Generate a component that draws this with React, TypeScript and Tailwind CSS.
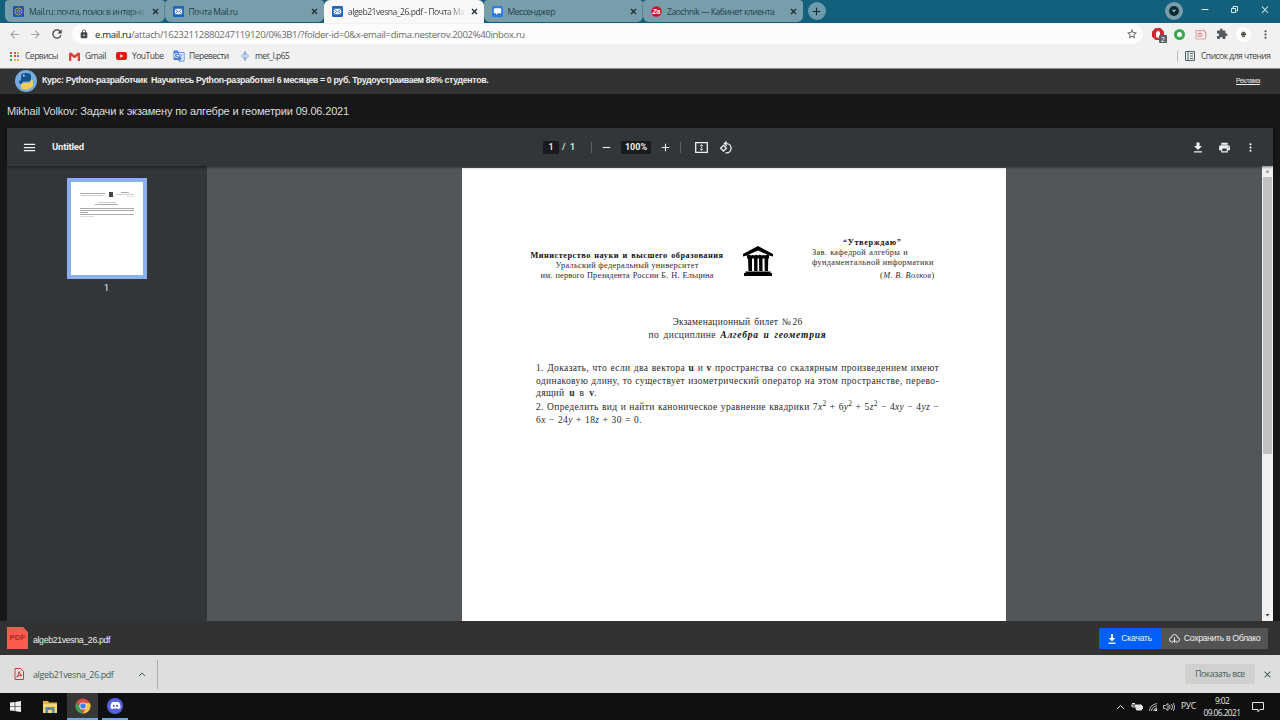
import React from "react";
import {
  MdLock, MdStarBorder, MdExtension, MdMoreVert, MdMenu, MdAdd, MdRemove, MdPrint, MdArrowBack,
  MdArrowForward, MdRefresh, MdClose, MdGTranslate,
} from "react-icons/md";
import { FaDiscord } from "react-icons/fa";

const ui = "font-['Open_Sans','Noto_Sans',sans-serif]";
const arial = "font-['Liberation_Sans',Arial,sans-serif]";
const line = "whitespace-nowrap [text-align-last:justify]";

function EnvelopeIcon() {
  return (
    <svg viewBox="0 0 12 12" className="size-[11px] shrink-0">
      <rect width="12" height="12" rx="1.5" fill="#1f63c0" />
      <rect x="2" y="3" width="8" height="6" fill="#fff" />
      <path d="M2.3 3.5 6 6.5l3.700-3M2.500 8.700 4.700 6M9.500 8.700 7.300 6" stroke="#1f63c0" fill="none" strokeWidth=".9" />
    </svg>
  );
}

function Tab({ icon, label, width, active, divider }: {
  icon: React.ReactNode; label: string; width: string; active?: boolean; divider?: boolean;
}) {
  const look = active ? "h-[23px] rounded-t-md bg-[#f8f8f8] text-[#444]" : "h-[22px] rounded-b-md rounded-t bg-[#789eab] text-[#1f434f]";
  return (
    <div className={`flex w-[159.5px] shrink-0 items-center pl-2 pr-[5px] ${look}`}>
      {icon}
      <div className={`ml-[5px] mt-px text-[8.6px] leading-[14px] tracking-[-0.5px] ${width} ${line}`}>{label}</div>
      <svg viewBox="0 0 9 9" className="ml-auto size-[9px] shrink-0 text-[#1f2f35]" fill="none" stroke="currentColor" strokeWidth="1.400"><path d="M2 2l5 5M7 2 2 7" /></svg>
      {divider && <div className="-mr-[5px] ml-[4px] h-[13px] w-px bg-[#5b808d]" />}
    </div>
  );
}

function TabStrip() {
  return (
    <div className="flex h-[23px] items-start bg-[#12607c] pl-[5px]">
      <Tab divider width="w-[115px] [mask-image:linear-gradient(to_right,#000_88%,#0003)]" label="Mail.ru: почта, поиск в интерне" icon={
        <svg viewBox="0 0 12 12" className="size-[11px] shrink-0"><rect width="12" height="12" rx="1.500" fill="#1d55b0" /><circle cx="6" cy="6" r="3.800" fill="none" stroke="#dba545" strokeWidth="1" /><circle cx="6" cy="6" r="1.500" fill="none" stroke="#dba545" /></svg>
      } />
      <Tab width="w-[49px]" label="Почта Mail.ru" icon={<EnvelopeIcon />} />
      <Tab active width="w-[116px] [mask-image:linear-gradient(to_right,#000_85%,#0002)]" label="algeb21vesna_26.pdf - Почта Ма" icon={<EnvelopeIcon />} />
      <Tab divider width="w-[47px]" label="Мессенджер" icon={
        <svg viewBox="0 0 12 12" className="size-[11px] shrink-0"><rect width="12" height="12" rx="2" fill="#2c7be0" /><path d="M2 3.500q0-1 1-1h6q1 0 1 1v3.500q0 1-1 1H6.500L4.500 9.800V8H3q-1 0-1-1z" fill="#fff" /></svg>
      } />
      <Tab width="w-[106px]" label="Zaochnik — Кабинет клиента" icon={
        <svg viewBox="0 0 12 12" className="size-[11px] shrink-0"><circle cx="6" cy="6" r="5.700" fill="#c5162e" /><text x="1.500" y="8.600" fontSize="7.500" fontWeight="bold" fontStyle="italic" fill="#fff" fontFamily="Liberation Sans">Za</text></svg>
      } />
      <div className="ml-[5px] mt-[2px] flex size-[18px] items-center justify-center rounded-full bg-[#6f9aa9]">
        <MdAdd className="size-[13px] text-[#102c36]" />
      </div>
      <div className="ml-auto mt-[2px] flex size-[18px] items-center justify-center rounded-full bg-[#789eab]">
        <svg viewBox="0 0 10 10" className="size-[10px]"><circle cx="5" cy="5" r="5" fill="#102a33" /><path d="M2.800 3.800h4.400L5 6.600z" fill="#9bb7c0" /></svg>
      </div>
      <svg viewBox="0 0 84 16" className="ml-[13px] mt-[2px] h-4 w-[84px] text-[#d5eaf1]" fill="none" stroke="currentColor">
        <path d="M5.500 7.500h7M66 4.500l6 6.500M72 4.500l-6 6.500" strokeWidth="1.100" />
        <path d="M35.500 6.500h4v4h-4zM37 6V4.500h4.500V9H40" />
      </svg>
    </div>
  );
}

function AddressBar() {
  return (
    <div className="flex h-[22px] items-center bg-[#f1f1f1] pl-[8px] text-[#55585b]">
      <MdArrowBack className="size-[13px] text-[#a6a6a6]" />
      <MdArrowForward className="ml-[8px] size-[13px] text-[#a6a6a6]" />
      <MdRefresh className="ml-[8px] size-[14px] text-[#3e4144]" />
      <div className="ml-[8px] flex h-[20px] w-[1071px] items-center rounded-full bg-[#fcfcfc] pl-[7px] pr-[5px]">
        <MdLock className="size-[10px] text-[#46494c]" />
        <div className={`ml-[6px] mt-px w-[430px] text-[9.6px] leading-4 text-[#6c6c6c] ${line} tracking-[-0.37px]`}>
          <span className="text-[#222]">e.mail.ru</span>/attach/16232112880247119120/0%3B1/?folder-id=0&amp;x-email=dima.nesterov.2002%40inbox.ru
        </div>
        <MdStarBorder className="ml-auto size-[12px]" />
      </div>
      <div className="relative ml-[9px] size-[12px]">
        <svg viewBox="0 0 12 12" className="size-3"><path d="M3.500 0h5L12 3.500v5L8.500 12h-5L0 8.500v-5z" fill="#cf2a33" /><path d="M4 9V4.500q.7-1 1.200 0V3q.8-1 1.400 0v1q.8-.8 1.400 0v4L6.500 10z" fill="#fff" /></svg>
        <div className="absolute left-[7px] top-[7px] flex h-[8px] w-[8px] items-center justify-center rounded-[1px] bg-[#596064] font-['Liberation_Sans'] text-[7px] leading-none text-white">2</div>
      </div>
      <div className="ml-[10px] size-[11px] rounded-full border-[3px] border-[#39a852] bg-white" />
      <svg viewBox="0 0 12 12" className="ml-[10px] size-[12px]" fill="none" stroke="#e09a9c"><path d="M1 2.500h7L10.500 5v6H1zM3 5.500h4v3H3zM5 3v5M8 1l3 3v5" /></svg>
      <MdExtension className="ml-[9px] size-[12px] text-[#54595c]" />
      <div className="ml-[8px] flex size-[15px] items-center justify-center rounded-full bg-white">
        <svg viewBox="0 0 8 8" className="size-[7px]"><circle cx="4" cy="3.500" r="2.800" fill="#777d73" /><path d="M1 4h6M2.500 6.500h3M4 1.500v2" stroke="#2e332d" /></svg>
      </div>
      <MdMoreVert className="ml-[8px] size-[13px]" />
    </div>
  );
}

const dots = ["#dc5144", "#dc5144", "#e9b13a", "#3a9d5c", "#dc5144", "#4a83d8", "#3a9d5c", "#e9b13a", "#e9b13a"];

function Bookmarks() {
  return (
    <div className="flex h-[24px] items-center border-b border-[#8e8e8e] bg-[#f1f1f1] pb-px pl-[10px] pr-[10px] text-[8.500px] leading-4 tracking-[-0.5px] text-[#404448]">
      <div className="grid grid-cols-3 gap-[1.500px]">
        {dots.map((c, i) => <div key={i} className="size-[2px]" style={{ background: c }} />)}
      </div>
      <div className="ml-[6px] w-[32px] whitespace-nowrap">Сервисы</div>
      <svg viewBox="0 0 11 9" className="ml-[12px] h-[9px] w-[11px]"><path d="M0 1.500V9h2.300V4l3.200 2.300L8.700 4v5H11V1.500Q10-.3 8.500.8l-3 2.400-3-2.400Q1-.3 0 1.500z" fill="#d9453a" /></svg>
      <div className="ml-[5px] w-[22px] tracking-[-0.4px]">Gmail</div>
      <svg viewBox="0 0 11 8" className="ml-[9px] h-[8px] w-[11px]"><rect width="11" height="8" rx="2" fill="#e8150d" /><path d="M4.300 2.200v3.600L7.400 4z" fill="#fff" /></svg>
      <div className="ml-[5px] w-[32px] whitespace-nowrap">YouTube</div>
      <MdGTranslate className="ml-[9px] size-[12px] text-[#4780d6]" />
      <div className="ml-[4px] w-[41px] whitespace-nowrap">Перевести</div>
      <svg viewBox="0 0 10 10" className="ml-[10px] size-[10px]" fill="none" stroke="#6d96d9"><path d="M5 0v10M5 1.500 8.500 5 5 8.500 1.500 5z" /></svg>
      <div className="ml-[5px] w-[36px] whitespace-nowrap">met_I.p65</div>
      <div className="ml-auto h-[11px] w-px bg-[#bbb]" />
      <svg viewBox="0 0 10 10" className="ml-[7px] size-[10px]" fill="none" stroke="#4d6367"><path d="M.5.5h9v9h-9zM3 .5v9M5 2.500h3M5 5h3M5 7.500h3" /></svg>
      <div className={`ml-[6px] w-[69px] ${line}`}>Список для чтения</div>
    </div>
  );
}

function PythonIcon() {
  return (
    <svg viewBox="0 0 22 22" className="size-[22px]">
      <circle cx="11" cy="11" r="11" fill="#76ade0" />
      <path d="M6 10.500V6q0-3 5-3t5 3v3q0 2.500-2.500 2.500h-4Q7 11.500 7 14H5.500Q4 14 4 10.500z" fill="#17548e" />
      <path d="M16 9.500h1q1.500 1 1 5t-3 3.500q-1 1.500-4.500 1.500-5 0-4.500-3v-1.500Q6 13 8.500 13h4Q16 13 16 9.500z" fill="#f4cc55" />
      <circle cx="8.800" cy="5.700" r=".9" fill="#d8ebfa" />
    </svg>
  );
}

function Ad() {
  return (
    <div className={`flex h-[25px] items-center bg-[#323232] pb-px pl-[15px] pr-[20px] text-[#eee] ${arial}`}>
      <PythonIcon />
      <div className={`ml-[5px] w-[103px] text-[8.800px] font-bold ${line} tracking-[-0.35px]`}>Курс: Python-разработчик</div>
      <div className={`ml-[6px] w-[337px] text-[8.800px] font-bold ${line} tracking-[-0.35px]`}>Научитесь Python-разработке! 6 месяцев = 0 руб. Трудоустраиваем 88% студентов.</div>
      <div className="mb-px ml-auto w-[24px] whitespace-nowrap text-[6.500px] tracking-[-0.3px] underline">Реклама</div>
    </div>
  );
}

function PdfToolbar() {
  return (
    <div className="relative z-10 flex h-[38px] shrink-0 items-center bg-[#323639] pl-[15px] pr-[16px] font-[Roboto,sans-serif] text-[9px] font-medium text-[#f0f0f0] shadow-[0_1px_3px_#0008]">
      <MdMenu className="size-[15px]" />
      <div className="ml-[15px] mt-px w-[34px] text-[9.500px] font-bold tracking-[-0.2px]">Untitled</div>
      <div className="ml-[457px] flex h-[13px] w-[16px] items-center justify-center bg-[#191b1c] pt-px">1</div>
      <div className="ml-[3px] mt-px w-[14px] whitespace-nowrap">/&nbsp; 1</div>
      <div className="ml-[15px] h-[11px] w-px bg-[#5c6063]" />
      <MdRemove className="ml-[8px] size-[13px]" />
      <div className="ml-[8px] flex h-[13px] w-[30px] items-center justify-center bg-[#191b1c] pt-px font-bold">100%</div>
      <MdAdd className="ml-[8px] size-[13px]" />
      <div className="ml-[8px] h-[11px] w-px bg-[#5c6063]" />
      <svg viewBox="0 0 13 11" className="ml-[14px] h-[11px] w-[13px]"><path d="M.7.700h11.600v9.600H.7z" fill="none" stroke="currentColor" strokeWidth="1.300" /><path d="M6.500 2.200 8.300 4.200H4.700zM6.500 8.800 8.300 6.800H4.700z" fill="currentColor" /><path d="M6 5h1v1H6z" fill="currentColor" /></svg>
      <svg viewBox="0 0 13 13" className="ml-[11px] size-[13px]" fill="none" stroke="currentColor" strokeWidth="1.300"><path d="M4.500 4.300 7.400 7.200 4.500 10 1.600 7.200zM6 2.600h1.500a4.600 4.600 0 0 1 0 9.200H6.500" /><path d="M7.700.500 5.500 2.600l2.200 2.100" /></svg>
      <svg viewBox="0 0 10 11" className="ml-auto h-[11px] w-[10px]" fill="currentColor"><path d="M3.500.500h3V4H9L5 8 1 4h2.500zM1 9.200h8v1.200H1z" /></svg>
      <MdPrint className="ml-[15px] size-[13px]" />
      <MdMoreVert className="ml-[13px] size-[13px]" />
    </div>
  );
}

function Thumbnail() {
  const bar = "h-px bg-[#aaa]";
  return (
    <div className="flex w-[200px] shrink-0 flex-col items-center bg-[#323639] pr-px pt-[12px] font-[Roboto,sans-serif]">
      <div className="flex h-[101px] w-[80px] flex-col border-4 border-[#8ab0ee] bg-white px-[9px] pt-[10px]">
        <div className="flex items-center justify-between">
          <div className="flex flex-col items-center gap-[1px]"><div className={`w-[25px] ${bar}`} /><div className="h-px w-[22px] bg-[#ccc]" /></div>
          <div className="h-[5px] w-[4px] bg-[#444]" />
          <div className="flex w-[17px] flex-col items-end gap-[1px]"><div className={`mr-[5px] w-[8px] ${bar}`} /><div className="h-px w-full bg-[#ccc]" /><div className="h-px w-[7px] bg-[#ddd]" /></div>
        </div>
        <div className="mt-[5px] flex flex-col items-center gap-px"><div className="h-px w-[18px] bg-[#ccc]" /><div className={`w-[23px] ${bar}`} /></div>
        <div className="mt-[3px] flex flex-col gap-px"><div className={bar} /><div className={bar} /><div className={`w-[8px] ${bar}`} /><div className={bar} /><div className="h-px w-[14px] bg-[#ddd]" /></div>
      </div>
      <div className="mt-[3px] text-[9px] leading-3 text-[#eee]">1</div>
    </div>
  );
}

function Sq() {
  return <sup className="top-[-4px] text-[7.400px] leading-none">2</sup>;
}

function Page() {
  const body = `w-[403px] ${line}`;
  return (
    <div className="mr-[2px] w-[544px] shrink-0 bg-white font-['Liberation_Serif',serif] text-[#2b2b2b]">
      <div className="mt-[68px] flex pl-[68.500px] text-[8.300px] leading-[10px]">
        <div className="mt-[15px] flex w-[194px] flex-col items-center">
          <div className={`w-[193px] font-bold text-[#111] tracking-[0.480px] ${line}`}>Министерство науки и высшего образования</div>
          <div className={`w-[143px] tracking-[0.32px] ${line}`}>Уральский федеральный университет</div>
          <div className={`w-[173px] tracking-[0.15px] ${line}`}>им. первого Президента России Б. Н. Ельцина</div>
        </div>
        <svg viewBox="0 0 30 30" className="ml-[18.500px] mt-[10px] size-[30px]" fill="#000">
          <path d="M15 0 30 8v2.500l-3-.7L15 4.500 3 9.800l-3 .7V8zM4 9.500q2-1.500 4 0 1.500-1.200 3.500 0 1.500-1.500 3.500 0 2-1.500 3.500 0 2-1.200 3.500 0 2-1.500 4 0v3H4zM5 11h4v14H5.500zM11 11h3.500v14H11.200zM16 11h3.500v14H16.200zM21.500 11h3.800l-.3 14h-3.300zM2.500 25.500h25V27H29v3H1v-3h1.500z" />
        </svg>
        <div className="ml-[39.500px] mt-[2px] w-[122px]">
          <div className={`ml-[31px] w-[58px] font-bold text-[#111] tracking-[0.6px] ${line}`}>“Утверждаю”</div>
          <div className={`w-[96px] tracking-[0.3px] ${line}`}>Зав. кафедрой алгебры и</div>
          <div className={`w-[121px] tracking-[0.32px] ${line}`}>фундаментальной информатики</div>
          <div className={`ml-auto mt-[3px] w-[54px] tracking-[0.35px] ${line}`}>(<i>М. В. Волков</i>)</div>
        </div>
      </div>
      <div className="mt-[35px] flex flex-col items-center pl-[8px] text-[9.500px] leading-[13px]">
        <div className={`w-[130px] tracking-[0.2px] ${line}`}>Экзаменационный билет №26</div>
        <div className={`w-[178px] tracking-[0.400px] ${line}`}>по дисциплине <b className="italic text-[#111] tracking-[0.8px]">Алгебра и геометрия</b></div>
      </div>
      <div className="ml-[74.500px] mt-[20px] text-[9.500px] leading-[12.500px] tracking-[0.36px]">
        <div className={body}>1. Доказать, что если два вектора <b>u</b> и <b>v</b> пространства со скалярным произведением имеют</div>
        <div className={body}>одинаковую длину, то существует изометрический оператор на этом пространстве, перево-</div>
        <div className={`w-[61px] ${line}`}>дящий <b>u</b> в <b>v</b>.</div>
        <div className={`mt-[1.500px] ${body}`}>2. Определить вид и найти каноническое уравнение квадрики 7<i>x</i><Sq /> + 6<i>y</i><Sq /> + 5<i>z</i><Sq /> − 4<i>xy</i> − 4<i>yz</i> −</div>
        <div className={`w-[106px] ${line}`}>6<i>x</i> − 24<i>y</i> + 18<i>z</i> + 30 = 0.</div>
      </div>
    </div>
  );
}

function Scrollbar() {
  return (
    <div className="flex w-[11px] shrink-0 flex-col items-center bg-[#f1f1f1]">
      <svg viewBox="0 0 11 11" className="size-[11px]"><path d="M3.500 6.500h4l-2-2.500z" fill="#888" /></svg>
      <div className="h-[277px] w-[9px] bg-[#c1c1c1]" />
      <svg viewBox="0 0 11 11" className="mt-auto size-[11px]"><path d="M3.500 4h4l-2 2.500z" fill="#444" /></svg>
    </div>
  );
}

function Taskbar() {
  return (
    <div className="flex h-[27px] items-center bg-[#101010] pl-[10px] pr-[16px] text-[#e6e6e6]">
      <svg viewBox="0 0 11 11" className="size-[11px]" fill="#eee"><path d="M0 1.600 4.700 1v4.200H0zM5.300.900 11 0v5.200H5.300zM0 5.800h4.700V10L0 9.400zM5.300 5.800H11V11l-5.700-.8z" /></svg>
      <svg viewBox="0 0 14 12" className="ml-[22px] h-3 w-[14px]"><path d="M0 0h5l1 1.500h8V12H0z" fill="#e5b440" /><path d="M0 3h14v9H0z" fill="#f7d878" /><path d="M2.500 6h9v6H9V9H5v3H2.500z" fill="#4e91ad" /></svg>
      <div className="ml-[10px] flex h-full w-[31px] items-center justify-center border-b-2 border-[#6aa7e8] bg-[#373737]">
        <svg viewBox="0 0 16 16" className="size-[16px]"><circle cx="8" cy="8" r="7.500" fill="#dd4b3e" /><path d="M1.500 4.300 5 10.500 8 15.500A7.500 7.500 0 0 1 1.500 4.300z" fill="#31a354" /><path d="M8 15.500 11.300 9.500 11 5h3.900A7.500 7.500 0 0 1 8 15.500z" fill="#f5c83b" /><circle cx="8" cy="8" r="3.600" fill="#fff" /><circle cx="8" cy="8" r="2.800" fill="#3f7fe6" /></svg>
      </div>
      <div className="ml-[4px] flex h-full w-[26px] items-center justify-center border-b-2 border-[#6aa7e8]">
        <div className="flex size-[16px] items-center justify-center rounded-full bg-[#5461de]"><FaDiscord className="size-[11px] text-white" /></div>
      </div>
      <svg viewBox="0 0 60 14" className="ml-auto h-[14px] w-[60px]" fill="none" stroke="currentColor">
        <path d="M1 9l3.500-3.500L8 9" />
        <path d="M19.500 5h6v5h-5z" fill="currentColor" /><path d="M16 3.500h3M15.500 5h4v2h-3zM26.500 6v3" />
        <path d="M33.500 11q0-6 7.500-7.500M35.500 11q0-4 5.500-5.500M37.500 11q0-2 3.500-3.500" strokeWidth=".8" /><path d="M38 11h3V8z" fill="currentColor" stroke="none" />
        <path d="M47.500 5.500h2l2.500-2v7L49.500 8.500h-2zM53.500 5q1 2 0 4M55.500 4q2 3 0 6M57.500 3q2 4 0 8" strokeWidth=".8" />
      </svg>
      <div className="ml-[5px] w-[15px] whitespace-nowrap text-[8.500px] tracking-[-0.3px]">РУС</div>
      <div className="ml-[8px] flex w-[36px] flex-col items-center whitespace-nowrap text-[8.300px] leading-[12px] tracking-[-0.55px]"><span>9:02</span><span>09.06.2021</span></div>
      <svg viewBox="0 0 12 12" className="ml-[12px] size-3" fill="none" stroke="currentColor"><path d="M.5 1.500h11v7H8L6 10.800V8.500H.5z" /></svg>
    </div>
  );
}

export default function App() {
  return (
    <div className={`flex h-[720px] w-[1280px] flex-col overflow-hidden bg-[#171717] [&>*]:shrink-0 ${ui}`}>
      <TabStrip />
      <AddressBar />
      <Bookmarks />
      <Ad />
      <div className={`flex h-[34px] items-center pl-[7px] pt-px text-[11px] text-[#ddd] ${arial}`}>
        <div className={`w-[342px] ${line} tracking-[-0.17px]`}>Mikhail Volkov: Задачи к экзамену по алгебре и геометрии 09.06.2021</div>
      </div>
      <div className="mx-[7px] flex h-[493px] flex-col bg-[#525659]">
        <PdfToolbar />
        <div className="flex min-h-0 grow">
          <Thumbnail />
          <div className="flex grow justify-center overflow-hidden pt-[2px]"><Page /></div>
          <Scrollbar />
        </div>
      </div>
      <div className={`flex h-[34px] items-center bg-[#323232] pl-[7px] pr-[12px] text-[#eee] ${arial}`}>
        <div className="flex h-[22px] w-[21px] items-center justify-center bg-[#fb5a4f] text-[8px] font-bold text-[#a92c28] [clip-path:polygon(0_0,77%_0,100%_23%,100%_100%,0_100%)]">PDF</div>
        <div className="ml-[5px] mt-[5px] whitespace-nowrap text-[8.800px] tracking-[-0.37px]">algeb21vesna_26.pdf</div>
        <div className="ml-auto flex h-[21px] w-[62px] items-center justify-center gap-[5px] bg-[#005ff9] pt-px text-[8.800px] tracking-[-0.37px]">
          <svg viewBox="0 0 8 10" className="h-[10px] w-2" fill="currentColor"><path d="M3 0h2v4h2.500L4 7.500.5 4H3zM.5 8.500h7V10h-7z" /></svg>Скачать
        </div>
        <div className="flex h-[21px] w-[107px] items-center justify-center gap-[4px] whitespace-nowrap bg-[#545454] pt-px text-[8.800px] tracking-[-0.4px]">
          <svg viewBox="0 0 11 9" className="h-[9px] w-[11px]" fill="none" stroke="currentColor"><path d="M4 8H2.500Q.5 7.500.5 5.500T2.500 3.500Q3 .5 5.500.5T8.500 3.500q2 0 2 2T8.500 8H7M5.500 3.500v5M4 6.500l1.500 1.700L7 6.500" /></svg>Сохранить в Облако
        </div>
      </div>
      <div className="flex h-[38px] items-center bg-[#dedede] pl-[14px] pr-[7px] text-[#3f5f55]">
        <svg viewBox="0 0 10 12" className="h-3 w-[10px]" fill="none" stroke="#c83c3c"><path d="M1 .5h5.500l3 3v8H1zM2.800 9Q5 6 5 3.500 5.500 7 8 7.500 5 7 2.800 9z" /></svg>
        <div className="ml-[9px] mt-px w-[81px] whitespace-nowrap text-[8.900px] tracking-[-0.33px]">algeb21vesna_26.pdf</div>
        <svg viewBox="0 0 8 5" className="ml-[24px] h-[5px] w-2" fill="none" stroke="currentColor"><path d="M1 4l3-3 3 3" /></svg>
        <div className="ml-[11px] h-[29px] w-px bg-[#aaa]" />
        <div className="ml-auto flex h-[20px] w-[70px] items-center justify-center whitespace-nowrap bg-[#d0d0d0] text-[8.600px] tracking-[-0.45px]">Показать все</div>
        <MdClose className="ml-[7px] size-[11px]" />
      </div>
      <Taskbar />
    </div>
  );
}
